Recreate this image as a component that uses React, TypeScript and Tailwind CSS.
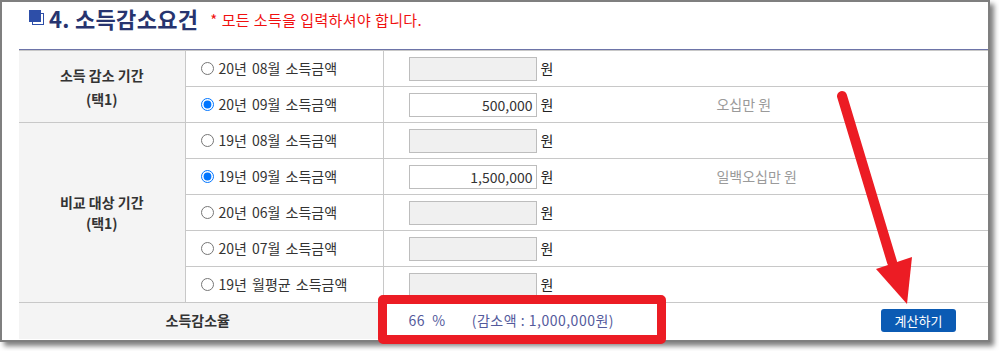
import React from 'react'

const font = { fontFamily: '"Noto Sans CJK KR", "Noto Sans", sans-serif' }

type Row = { label: string; checked?: boolean; value?: string; words?: string }

const group1: Row[] = [
  { label: '20년 08월 소득금액' },
  { label: '20년 09월 소득금액', checked: true, value: '500,000', words: '오십만 원' },
]

const group2: Row[] = [
  { label: '19년 08월 소득금액' },
  { label: '19년 09월 소득금액', checked: true, value: '1,500,000', words: '일백오십만 원' },
  { label: '20년 06월 소득금액' },
  { label: '20년 07월 소득금액' },
  { label: '19년 월평균 소득금액' },
]

function Cells({ row, name }: { row: Row; name: string }) {
  return (
    <>
      <td className="border-r border-[#c8c8c8] pl-[15px]">
        <label className="flex items-center gap-[5px] text-[14px] text-[#333]">
          <input
            type="radio"
            name={name}
            defaultChecked={row.checked}
            className="m-0 h-[13px] w-[13px] accent-[#0075ff]"
          />
          <span className="[word-spacing:2px]">{row.label}</span>
        </label>
      </td>
      <td className="pl-[25px]">
        <div className="flex items-center">
          <input
            readOnly
            disabled={!row.value}
            value={row.value ?? ''}
            className={
              'h-[24px] w-[128px] border border-[#bdbdbd] px-[3px] text-right text-[14px] text-[#333] outline-none ' +
              (row.value ? 'bg-white' : 'bg-[#f0f0f0]')
            }
          />
          <span className="ml-[4px] text-[14px] text-[#222]">원</span>
          <span className="ml-[163px] text-[14px] text-[#9a9a9a]">{row.words}</span>
        </div>
      </td>
    </>
  )
}

export default function App() {
  return (
    <div className="h-[351px] w-[999px] bg-white" style={font}>
      <div className="relative h-[342px] w-[990px] border-2 border-[#7f7f7f] bg-white pl-[17px] shadow-[4px_4px_5px_rgba(0,0,0,0.5)]">
        {/* heading */}
        <div className="flex h-[47px] items-start pt-[1px]">
          <div className="relative ml-[10px] mt-[7px] h-[16px] w-[16px]">
            <div className="absolute left-[3px] top-[3px] h-[12px] w-[12px] border border-[#2d4ea8] bg-white" />
            <div className="absolute left-0 top-0 h-[12px] w-[12px] bg-[#2d4ea8]" />
          </div>
          <h2 className="ml-[4px] text-[22px] font-bold leading-[30px] tracking-[0.3px] text-[#27346f]">4. 소득감소요건</h2>
          <span className="ml-[12px] mt-[7px] text-[15px] leading-[20px] tracking-[0.4px] text-[#f01010]">
            <span className="mr-[4px]">*</span>모든 소득을 입력하셔야 합니다.
          </span>
        </div>

        {/* table */}
        <div className="border-t border-[#6d74a8]">
          <table className="w-full table-fixed border-collapse border-t border-[#c8c8c8]">
            <colgroup>
              <col className="w-[166px]" />
              <col className="w-[198px]" />
              <col />
            </colgroup>
            <tbody>
              {group1.map((row, i) => (
                <tr key={row.label} className="h-[36px] border-b border-[#c8c8c8]">
                  {i === 0 && (
                    <th
                      rowSpan={group1.length}
                      className="border-r border-[#c8c8c8] bg-[#f4f4f4] text-[14px] font-bold leading-[24px] text-[#333]"
                    >
                      소득 감소 기간
                      <br />
                      (택1)
                    </th>
                  )}
                  <Cells row={row} name="g1" />
                </tr>
              ))}
              {group2.map((row, i) => (
                <tr key={row.label} className="h-[36px] border-b border-[#c8c8c8]">
                  {i === 0 && (
                    <th
                      rowSpan={group2.length}
                      className="border-r border-[#c8c8c8] bg-[#f4f4f4] text-[14px] font-bold leading-[21px] text-[#333]"
                    >
                      비교 대상 기간
                      <br />
                      (택1)
                    </th>
                  )}
                  <Cells row={row} name="g2" />
                </tr>
              ))}
              <tr className="h-[36px]">
                <th colSpan={2} className="border-r border-[#c8c8c8] bg-[#f4f4f4] pr-[6px] text-[14px] font-bold text-[#333]">
                  소득감소율
                </th>
                <td className="pl-[25px]">
                  <div className="flex items-center justify-between pr-[32px] text-[14px] tracking-[0.5px] text-[#545a9c]">
                    <span>
                      66&nbsp;&nbsp;%<span className="ml-[26px]">(감소액 : 1,000,000원)</span>
                    </span>
                    <button className="h-[23px] w-[75px] rounded-[3px] bg-[#0b5bb4] text-[13px] tracking-normal text-white">
                      계산하기
                    </button>
                  </div>
                </td>
              </tr>
            </tbody>
          </table>
        </div>

        {/* annotations */}
        <div className="absolute left-[376px] top-[293px] h-[49px] w-[288px] rounded-[5px] border-[9px] border-[#ec1c24]" />
        <svg className="pointer-events-none absolute left-[-2px] top-[-2px]" width="999" height="351">
          <line x1="842" y1="96" x2="892" y2="262" stroke="#ec1c24" strokeWidth="10" strokeLinecap="round" />
          <polygon points="876,269 912,257 907,304" fill="#ec1c24" />
        </svg>
      </div>
    </div>
  )
}
